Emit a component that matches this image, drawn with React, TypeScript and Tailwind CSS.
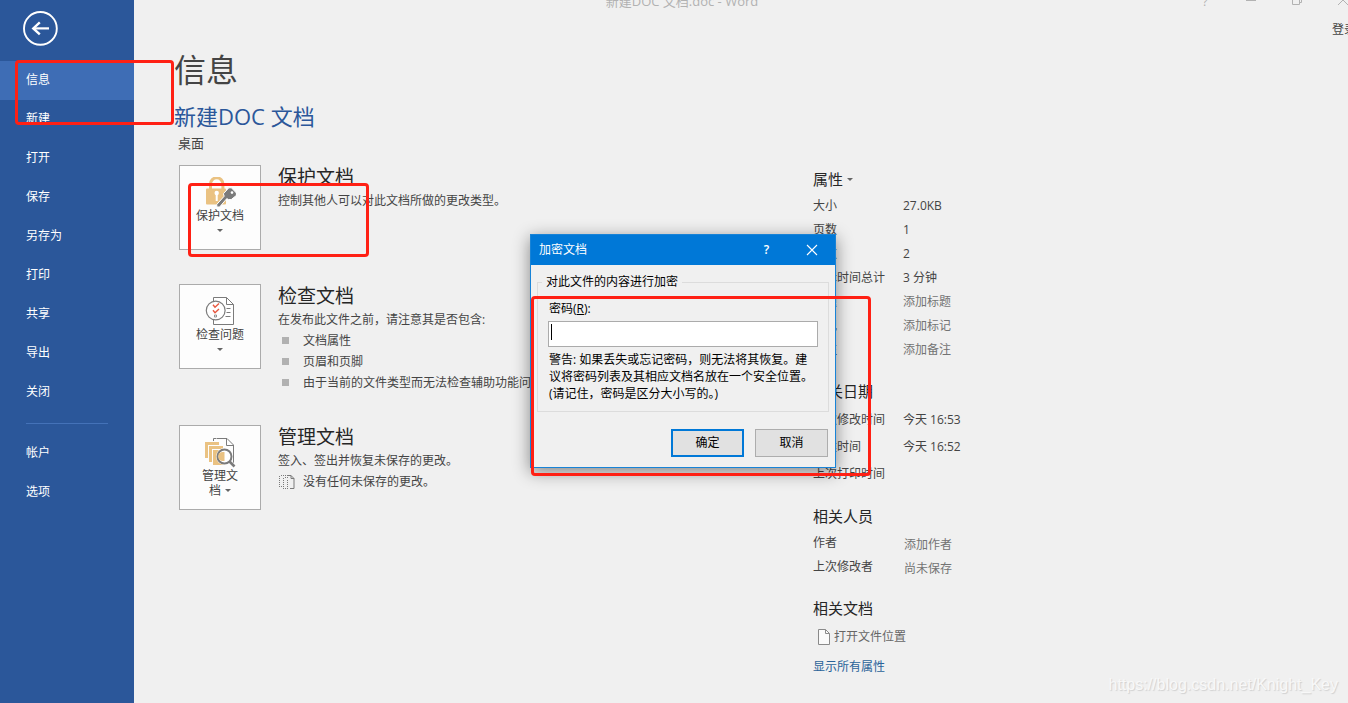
import { ReactNode } from "react";

const NAV_ITEMS = [
	"信息",
	"新建",
	"打开",
	"保存",
	"另存为",
	"打印",
	"共享",
	"导出",
	"关闭",
];

const FOOTER_ITEMS = ["帐户", "选项"];

type PropertyRow = {
	label: string;
	value: string;
	placeholder?: boolean;
};

const GENERAL_ROWS: PropertyRow[] = [
	{ label: "大小", value: "27.0KB" },
	{ label: "页数", value: "1" },
	{ label: "字数", value: "2" },
	{ label: "编辑时间总计", value: "3 分钟" },
	{ label: "标题", value: "添加标题", placeholder: true },
	{ label: "标记", value: "添加标记", placeholder: true },
	{ label: "备注", value: "添加备注", placeholder: true },
];

const DATE_ROWS: PropertyRow[] = [
	{ label: "上次修改时间", value: "今天 16:53" },
	{ label: "创建时间", value: "今天 16:52" },
	{ label: "上次打印时间", value: "" },
];

const PEOPLE_ROWS: PropertyRow[] = [
	{ label: "作者", value: "添加作者", placeholder: true },
	{ label: "上次修改者", value: "尚未保存", placeholder: true },
];

function BackIcon() {
	return (
		<svg viewBox="0 0 36 36" className="w-9 h-9" fill="none" stroke="white" aria-hidden>
			<circle cx="18.4" cy="18.4" r="16.4" strokeWidth="1.9" />
			<path d="M27 18.4H11" strokeWidth="2.2" />
			<path d="M17.8 12.4 11.3 18.4l6.5 6" strokeWidth="2.4" />
		</svg>
	);
}

function LockKeyIcon() {
	return (
		<svg viewBox="0 0 32 31" className="w-8 h-[31px]" aria-hidden>
			<path
				d="M6.5 12V7a6.2 6.2 0 0 1 12.4 0v5"
				fill="none"
				stroke="#eac282"
				strokeWidth="3"
			/>
			<rect x="2" y="11.5" width="20" height="16" rx="1" fill="#eac282" />
			<circle cx="12.7" cy="16" r="2.2" fill="white" />
			<path d="M11.7 16.5h2V24h-2z" fill="white" />
			<path
				d="M24.8 10.8h2.6l5 5.2v2.4l-5.2 4.2h-2.8l-1.6-1-7.2 8.4h-2.8v-2.6l7.4-8.2-.8-2.4z"
				fill="#7b7b7b"
				stroke="white"
				strokeWidth="1"
			/>
			<circle cx="28" cy="15.6" r="1.3" fill="white" />
		</svg>
	);
}

function InspectIcon() {
	return (
		<svg viewBox="0 0 32 31" className="w-8 h-[31px]" fill="none" aria-hidden>
			<path d="M9.5 1.5h13l7 7v20h-20z" fill="white" stroke="#7b7b7b" />
			<path d="M22.5 1.5v7h7" stroke="#7b7b7b" />
			<path d="M22.5 12.5h4M22.5 16.5h4M21.5 20.5h5" stroke="#7b7b7b" />
			<circle cx="11.7" cy="14.5" r="9.4" fill="white" stroke="#7b7b7b" strokeWidth="1.2" />
			<path
				d="m9 8.8 2 2.4 4-3.8M9 14.3l2 2.4 4-3.8"
				stroke="#e8573f"
				strokeWidth="1.4"
			/>
			<path d="M10.5 19h2v2h-2z" stroke="#7b7b7b" strokeWidth=".8" />
		</svg>
	);
}

function VersionsIcon() {
	return (
		<svg viewBox="0 0 32 31" className="w-8 h-[31px]" fill="none" aria-hidden>
			<path d="M9.5 4V1.5h3" stroke="#7b7b7b" />
			<path d="M13 1.5h10l6.5 6.5v18.5h-3" stroke="#7b7b7b" />
			<path d="M22.5 1.5v7h7" stroke="#7b7b7b" />
			<path d="M1 5h14v3H4v13H1z" fill="#eac282" />
			<path d="M5 9h14v3H8v13H5z" fill="#eac282" />
			<path d="M9 13h12v15H9z" fill="#eac282" />
			<path d="m26 25 5 5" stroke="white" strokeWidth="4" />
			<circle cx="20.5" cy="19.5" r="8.4" fill="white" />
			<circle cx="20.5" cy="19.5" r="7" stroke="#7b7b7b" strokeWidth="2" />
			<path d="M20.5 15v9h-1.8a4.5 4.5 0 0 1 0-9z" fill="#eac282" />
			<path d="m25.5 24.5 5 5" stroke="#7b7b7b" strokeWidth="2.6" />
		</svg>
	);
}

function UnsavedIcon() {
	return (
		<svg viewBox="0 0 16 16" className="w-4 h-4" fill="none" stroke="#7b7b7b" aria-hidden>
			<path d="M.5 2v11M2 1.5h5M2 12.5h2" strokeDasharray="1 1" />
			<path d="M4.5 4v11M6 3.5h4M6 14.5h2" strokeDasharray="1 1" />
			<path d="M8.5 6v9" strokeDasharray="1 1" />
			<path d="M8 1.5h4l3 3v10h-4M12 1.5v3h3" />
		</svg>
	);
}

function FileIcon() {
	return (
		<svg viewBox="0 0 13 17" className="w-[13px] h-[17px]" aria-hidden>
			<path d="M1.5.5h7l4 4v11h-11z" fill="#fafafa" stroke="#8a8a8a" />
			<path d="M8.5.5v4h4" fill="none" stroke="#8a8a8a" />
		</svg>
	);
}

function Caret() {
	return (
		<svg viewBox="0 0 6 3" className="inline-block w-1.5 h-[3px]" aria-hidden>
			<path d="M0 0h6L3 3z" fill="#666" />
		</svg>
	);
}

function ActionCard({
	icon,
	lines,
	children,
	title,
}: {
	icon: ReactNode;
	lines: string[];
	title: string;
	children: ReactNode;
}) {
	return (
		<section className="flex gap-[17px]">
			<button
				type="button"
				className="flex flex-col items-center w-[82px] h-[85px] shrink-0 border border-[#ababab] bg-[#fdfdfd] pt-[11px] leading-[15px]"
			>
				{icon}
				<span>{lines[0]}</span>
				<span className="flex items-center gap-1 h-[15px]">
					{lines[1]}
					<Caret />
				</span>
			</button>
			<div className="min-w-0">
				<h3 className="text-[19px] leading-6 text-[#262626] mb-0.5">{title}</h3>
				{children}
			</div>
		</section>
	);
}

function PropertyTable({
	rows,
	rowClass = "h-6",
	valueClass = "",
}: {
	rows: PropertyRow[];
	rowClass?: string;
	valueClass?: string;
}) {
	return (
		<table className="border-collapse">
			<tbody>
				{rows.map((row) => (
					<tr key={row.label} className={rowClass}>
						<th scope="row" className="w-[90px] p-0 text-left font-normal leading-5">
							{row.label}
						</th>
						<td
							className={`p-0 leading-5 ${valueClass} ${
								row.placeholder ? "text-[#737373]" : ""
							}`}
						>
							{row.value}
						</td>
					</tr>
				))}
			</tbody>
		</table>
	);
}

function PropertyHeading({ children }: { children: ReactNode }) {
	return (
		<h2 className="flex items-center gap-1 text-[15px] leading-6 mb-[3px] text-[#262626]">
			{children}
		</h2>
	);
}

function Sidebar() {
	return (
		<nav className="w-[134px] shrink-0 bg-[#2b579a] text-white">
			<div className="h-[61px] pl-[22px] pt-2.5">
				<button type="button" aria-label="返回" className="block">
					<BackIcon />
				</button>
			</div>
			{NAV_ITEMS.map((item, index) => (
				<a
					key={item}
					href="#"
					className={`block h-[39px] pl-[26px] leading-[37px] ${
						index === 0 ? "bg-[#3e6db5]" : ""
					}`}
				>
					{item}
				</a>
			))}
			<div className="mx-[26px] mt-[11px] mb-2.5 border-t border-[#4472b8]" />
			{FOOTER_ITEMS.map((item) => (
				<a key={item} href="#" className="block h-[39px] pl-[26px] leading-[37px]">
					{item}
				</a>
			))}
		</nav>
	);
}

function TitleBar() {
	return (
		<header className="flex h-4 overflow-hidden text-[#b2b2b2]">
			<div className="flex-1 pl-12 text-center text-[13px] leading-4">
				<p className="-mt-[7px]">新建DOC 文档.doc - Word</p>
			</div>
			<div className="flex -mr-[18px] -mt-2">
				<button type="button" aria-label="帮助" className="w-[46px] leading-3 pb-1">
					?
				</button>
				<button type="button" aria-label="最小化" className="w-[46px] flex justify-center">
					<svg viewBox="0 0 10 16" className="w-2.5 h-4">
						<path d="M0 8.5h10" stroke="currentColor" />
					</svg>
				</button>
				<button type="button" aria-label="还原" className="w-[46px] flex justify-center">
					<svg viewBox="0 0 10 16" className="w-2.5 h-4" fill="none" stroke="currentColor">
						<path d="M.5 5.5h7v7h-7zM2.5 5.5v-2h7v7h-2" />
					</svg>
				</button>
				<button type="button" aria-label="关闭窗口" className="w-[46px] flex justify-center">
					<svg viewBox="0 0 10 16" className="w-2.5 h-4" stroke="currentColor">
						<path d="m0 3 10 10M10 3 0 13" />
					</svg>
				</button>
			</div>
		</header>
	);
}

function EncryptDialog() {
	return (
		<div
			role="dialog"
			aria-label="加密文档"
			className="absolute left-[530px] top-[234px] w-[306px] border border-[#1883d7] bg-[#f0f0f0] text-black shadow-[0_4px_16px_rgba(0,0,0,0.45)]"
		>
			<div className="flex items-center h-[30px] bg-[#0078d7] pl-2 pr-px text-white">
				<span className="flex-1">加密文档</span>
				<button type="button" aria-label="帮助" className="w-[45px] font-semibold">
					?
				</button>
				<button type="button" aria-label="关闭" className="w-[45px] flex justify-center">
					<svg viewBox="0 0 12 12" className="w-3 h-3" stroke="white" strokeWidth="1.1">
						<path d="m1 1 10 10M11 1 1 11" />
					</svg>
				</button>
			</div>
			<form className="px-1.5 pt-[9px] pb-2.5" onSubmit={(e) => e.preventDefault()}>
				<fieldset className="border border-[#dcdcdc] px-2.5 pb-[9px]">
					<legend className="-ml-1.5 px-1 leading-4">对此文件的内容进行加密</legend>
					<label htmlFor="password" className="block mt-[11px] pl-px leading-4">
						密码(<u>R</u>):
					</label>
					<div className="relative mt-1">
						<input
							id="password"
							type="password"
							className="block w-full h-[26px] border border-[#ababab] bg-white px-1 outline-none"
						/>
						<span className="absolute left-[3px] top-[3px] w-px h-4 bg-black" />
					</div>
					<p className="mt-1 pl-px leading-[17px]">
						警告: 如果丢失或忘记密码，则无法将其恢复。建议将密码列表及其相应文档名放在一个安全位置。
						<br />
						(请记住，密码是区分大小写的。)
					</p>
				</fieldset>
				<div className="flex justify-end gap-[11px] mt-[17px] pr-px">
					<button
						type="submit"
						className="w-[73px] h-7 border-2 border-[#0078d7] bg-[#e1e1e1]"
					>
						确定
					</button>
					<button type="button" className="w-[73px] h-7 border border-[#adadad] bg-[#e1e1e1]">
						取消
					</button>
				</div>
			</form>
		</div>
	);
}

export default function App() {
	return (
		<div className="relative flex min-h-screen overflow-hidden bg-[#f0f0f0] text-xs text-[#444444] font-['Open_Sans','Noto_Sans_CJK_SC',sans-serif]">
			<Sidebar />

			<div className="flex-1 min-w-0">
				<TitleBar />
				<div className="flex justify-end h-7">
					<button type="button" className="w-4 overflow-hidden whitespace-nowrap">
						登录
					</button>
				</div>

				<main className="pl-10 pt-1.5">
					<h1 className="text-[32px] leading-10">信息</h1>
					<h2 className="mt-3 text-[22px] leading-7 text-[#2b579a]">新建DOC 文档</h2>
					<p className="mt-[3px] pl-1 text-[13px] leading-5">桌面</p>

					<div className="grid grid-cols-[634px_1fr] mt-3 pl-[5px]">
						<div className="flex flex-col gap-[34px]">
							<ActionCard icon={<LockKeyIcon />} lines={["保护文档"]} title="保护文档">
								<p className="leading-5">控制其他人可以对此文档所做的更改类型。</p>
							</ActionCard>
							<ActionCard icon={<InspectIcon />} lines={["检查问题"]} title="检查文档">
								<p className="leading-5">在发布此文件之前，请注意其是否包含:</p>
								<ul className="-mb-0.5 leading-[21px]">
									{[
										"文档属性",
										"页眉和页脚",
										"由于当前的文件类型而无法检查辅助功能问题",
									].map((text) => (
										<li key={text} className="flex items-center gap-3.5 pl-1">
											<span className="w-[7px] h-[7px] bg-[#b1b1b1]" />
											{text}
										</li>
									))}
								</ul>
							</ActionCard>
							<ActionCard icon={<VersionsIcon />} lines={["管理文", "档"]} title="管理文档">
								<p className="leading-5">签入、签出并恢复未保存的更改。</p>
								<p className="flex items-center gap-2 pl-px leading-[21px]">
									<UnsavedIcon />
									没有任何未保存的更改。
								</p>
							</ActionCard>
						</div>

						<aside className="flex flex-col gap-[17px] pt-0.5">
							<section>
								<PropertyHeading>
									属性
									<Caret />
								</PropertyHeading>
								<PropertyTable rows={GENERAL_ROWS} />
							</section>
							<section>
								<PropertyHeading>相关日期</PropertyHeading>
								<PropertyTable rows={DATE_ROWS} rowClass="h-[27px]" />
							</section>
							<section>
								<PropertyHeading>相关人员</PropertyHeading>
								<PropertyTable rows={PEOPLE_ROWS} valueClass="pt-1 pl-px" />
							</section>
							<section>
								<PropertyHeading>相关文档</PropertyHeading>
								<a href="#" className="flex items-center gap-1 h-7 pl-1 text-[#666666]">
									<FileIcon />
									打开文件位置
								</a>
								<a href="#" className="inline-block mt-1 leading-6 text-[#2a6399]">
									显示所有属性
								</a>
							</section>
						</aside>
					</div>
				</main>
			</div>

			<EncryptDialog />

			<div className="pointer-events-none absolute left-[15px] top-[60px] w-[159px] h-[65px] rounded border-3 border-[#ff2014]" />
			<div className="pointer-events-none absolute left-[188px] top-[183px] w-[181px] h-[74px] rounded border-3 border-[#ff2014]" />
			<div className="pointer-events-none absolute left-[531px] top-[296px] w-[340px] h-[180px] rounded border-3 border-[#ff2014]" />

			<p className="absolute right-2.5 bottom-1.5 text-base leading-6 text-[#f8f8f8] font-['Liberation_Sans',sans-serif] [text-shadow:1px_1px_1px_#d0d0d0]">
				https://blog.csdn.net/Knight_Key
			</p>
		</div>
	);
}
